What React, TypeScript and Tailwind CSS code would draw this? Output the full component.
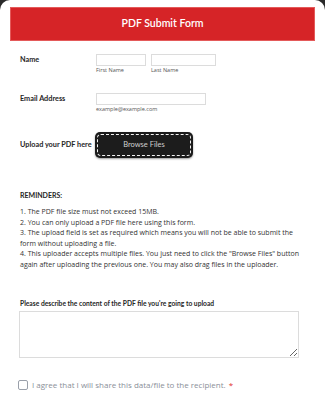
export default function App() {
  const reminders = [
    '1. The PDF file size must not exceed 15MB.',
    '2. You can only upload a PDF file here using this form.',
    '3. The upload field is set as required which means you will not be able to submit the form without uploading a file.',
    '4. This uploader accepts multiple files. You just need to click the "Browse Files" button again after uploading the previous one. You may also drag files in the uploader.',
  ];

  return (
    <div className="min-h-[400px] bg-[#2a2a2a]" style={{ fontFamily: 'Lato, "Open Sans", sans-serif' }}>
      <div className="min-h-[400px] rounded-t-[10px] bg-white px-[10px] pt-[7px] text-[#262626]">
        {/* header */}
        <div className="flex h-[34px] items-center justify-center border border-[#e45a5a] bg-[#d62427]">
          <h1 className="text-[10.5px] font-semibold text-white">PDF Submit Form</h1>
        </div>

        <div className="px-[10px]">
          {/* name */}
          <div className="mt-[13px] flex">
            <label className="w-[76px] pt-[1px] text-[7.3px] leading-[10px] font-bold">Name</label>
            <div className="flex gap-[5px] font-['Open_Sans']">
              <div className="flex flex-col">
                <div className="h-[12px] w-[50px] border border-[#dcdcdc]" />
                <span className="mt-[1px] text-[5.5px] leading-[7px] text-[#555]">First Name</span>
              </div>
              <div className="flex flex-col">
                <div className="h-[12px] w-[65px] border border-[#dcdcdc]" />
                <span className="mt-[1px] text-[5.5px] leading-[7px] text-[#555]">Last Name</span>
              </div>
            </div>
          </div>

          {/* email */}
          <div className="mt-[19px] flex">
            <label className="w-[76px] pt-[1px] text-[7.3px] leading-[10px] font-bold">Email Address</label>
            <div className="flex flex-col font-['Open_Sans']">
              <div className="h-[12px] w-[110px] border border-[#dcdcdc]" />
              <span className="mt-[1px] text-[5.5px] leading-[7px] text-[#555]">example@example.com</span>
            </div>
          </div>

          {/* upload */}
          <div className="mt-[19px] flex items-center">
            <label className="w-[75px] text-[7.3px] leading-[10px] font-bold">Upload your PDF here</label>
            <div className="h-[26px] w-[98px] rounded-[5px] bg-[#1c1c1c] p-[2px] shadow-[0_1px_2px_rgba(0,0,0,0.4)]">
              <div className="flex h-full items-center justify-center rounded-[4px] border-[1.5px] border-dashed border-[#f2f2f2]">
                <span className="text-[7.5px] text-[#d0d0d0]">Browse Files</span>
              </div>
            </div>
          </div>

          {/* reminders */}
          <p className="mt-[32px] text-[7px] leading-[10px] font-bold">REMINDERS:</p>
          <div className="mt-[7px] font-['Open_Sans'] text-[7px] leading-[10.6px] text-[#333]">
            {reminders.map((r) => (
              <p key={r}>{r}</p>
            ))}
          </div>

          {/* description */}
          <p className="mt-[27px] text-[6.7px] leading-[10px] font-bold">
            Please describe the content of the PDF file you're going to upload
          </p>
          <textarea className="mt-[3px] -ml-[1px] block h-[47px] w-[280px] resize border border-[#dcdcdc]" />

          {/* agree */}
          <div className="mt-[21px] -ml-[2px] flex items-center font-['Open_Sans']">
            <span className="h-[10px] w-[10px] rounded-[2px] border border-[#9aa0aa]" />
            <span className="ml-[4px] text-[8px] text-[#8a8f99]">
              I agree that I will share this data/file to the recipient.
            </span>
            <span className="ml-[3px] text-[8px] text-[#e02b2b]">*</span>
          </div>
        </div>
      </div>
    </div>
  );
}
